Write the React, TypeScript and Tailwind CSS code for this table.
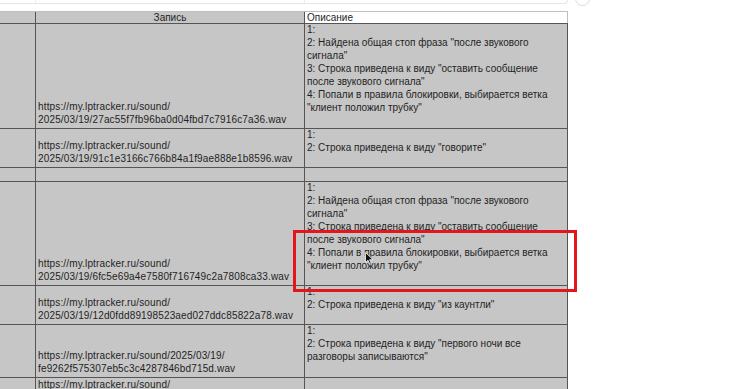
import React from 'react';

type Row = {
  h: string;
  url: string[];
  desc: string[];
  top?: boolean;
};

const rows: Row[] = [
  {
    h: 'h-[105px]',
    url: ['https://my.lptracker.ru/sound/', '2025/03/19/27ac55f7fb96ba0d04fbd7c7916c7a36.wav'],
    desc: [
      '1:',
      '2: Найдена общая стоп фраза "после звукового',
      'сигнала"',
      '3: Строка приведена к виду "оставить сообщение',
      'после звукового сигнала"',
      '4: Попали в правила блокировки, выбирается ветка',
      '"клиент положил трубку"',
    ],
  },
  {
    h: 'h-[39px]',
    url: ['https://my.lptracker.ru/sound/', '2025/03/19/91c1e3166c766b84a1f9ae888e1b8596.wav'],
    desc: ['1:', '2: Строка приведена к виду "говорите"'],
  },
  { h: 'h-[14px]', url: [], desc: [] },
  {
    h: 'h-[104px]',
    url: ['https://my.lptracker.ru/sound/', '2025/03/19/6fc5e69a4e7580f716749c2a7808ca33.wav'],
    desc: [
      '1:',
      '2: Найдена общая стоп фраза "после звукового',
      'сигнала"',
      '3: Строка приведена к виду "оставить сообщение',
      'после звукового сигнала"',
      '4: Попали в правила блокировки, выбирается ветка',
      '"клиент положил трубку"',
    ],
  },
  {
    h: 'h-[39px]',
    url: ['https://my.lptracker.ru/sound/', '2025/03/19/12d0fdd89198523aed027ddc85822a78.wav'],
    desc: ['1:', '2: Строка приведена к виду "из каунтли"'],
  },
  {
    h: 'h-[53px]',
    url: ['https://my.lptracker.ru/sound/2025/03/19/', 'fe9262f575307eb5c3c4287846bd715d.wav'],
    desc: ['1:', '2: Строка приведена к виду "первого ночи все', 'разговоры записываются"'],
  },
  {
    h: 'h-[20px]',
    url: ['https://my.lptracker.ru/sound/'],
    desc: [],
    top: true,
  },
];

function Lines({ items }: { items: string[] }) {
  return (
    <>
      {items.map((t, i) => (
        <div key={i} className="whitespace-nowrap">
          {t}
        </div>
      ))}
    </>
  );
}

export default function App() {
  return (
    <div className="relative w-[741px] h-[389px] overflow-hidden bg-white text-[10px] leading-[13px] text-[#1f1f1f] font-['Liberation_Sans',Arial,sans-serif]">
      {/* faint toolbar strip above the sheet */}
      <div className="h-[11px]">
        <div className="w-[568px] h-[4px] border-b border-r border-[#e6e6e6] rounded-br-[4px] flex">
          <div className="w-[36px] border-r border-[#eeeeee]" />
          <div className="w-[269px] border-r border-[#eeeeee]" />
        </div>
      </div>
      <div className="absolute left-[575px] top-[-9px] w-[15px] h-[15px] rounded-full border border-[#dcdcdc]" />

      <div className="w-[568px] flex flex-col">
        {/* header */}
        <div className="flex h-[13px] border-t border-[#bdbdbd] border-b border-b-[#555]">
          <div className="w-[36px] bg-[#c6c6c6] border-r border-[#555]" />
          <div className="w-[269px] bg-[#c6c6c6] border-r border-[#555] text-center leading-[11px]">Запись</div>
          <div className="flex-1 bg-white border-r border-[#bdbdbd] pl-[2px] leading-[11px]">Описание</div>
        </div>

        {rows.map((r, i) => (
          <div key={i} className={`flex ${r.h} border-b border-[#555] bg-[#c6c6c6]`}>
            <div className="w-[36px] border-r border-[#555]" />
            <div
              className={`w-[269px] border-r border-[#555] pl-[2px] tracking-[0.15px] flex flex-col ${
                r.top ? 'justify-start' : 'justify-end pb-[2px]'
              }`}
            >
              <Lines items={r.url} />
            </div>
            <div className="flex-1 border-r border-[#555] pl-[2px] -mt-[1px]">
              <Lines items={r.desc} />
            </div>
          </div>
        ))}
      </div>

      {/* highlight frame */}
      <div className="absolute left-[293px] top-[230px] w-[284px] h-[62px] border-[3px] border-[#e3161b]" />

      {/* mouse pointer */}
      <svg className="absolute left-[365px] top-[252px]" width="9" height="13" viewBox="0 0 9 13">
        <path d="M0.5 0.5 L0.5 10.5 L3 8.2 L4.8 12.3 L6.3 11.6 L4.6 7.7 L8 7.7 Z" fill="#111" stroke="#f5f5f5" strokeWidth="0.8" />
      </svg>
    </div>
  );
}
